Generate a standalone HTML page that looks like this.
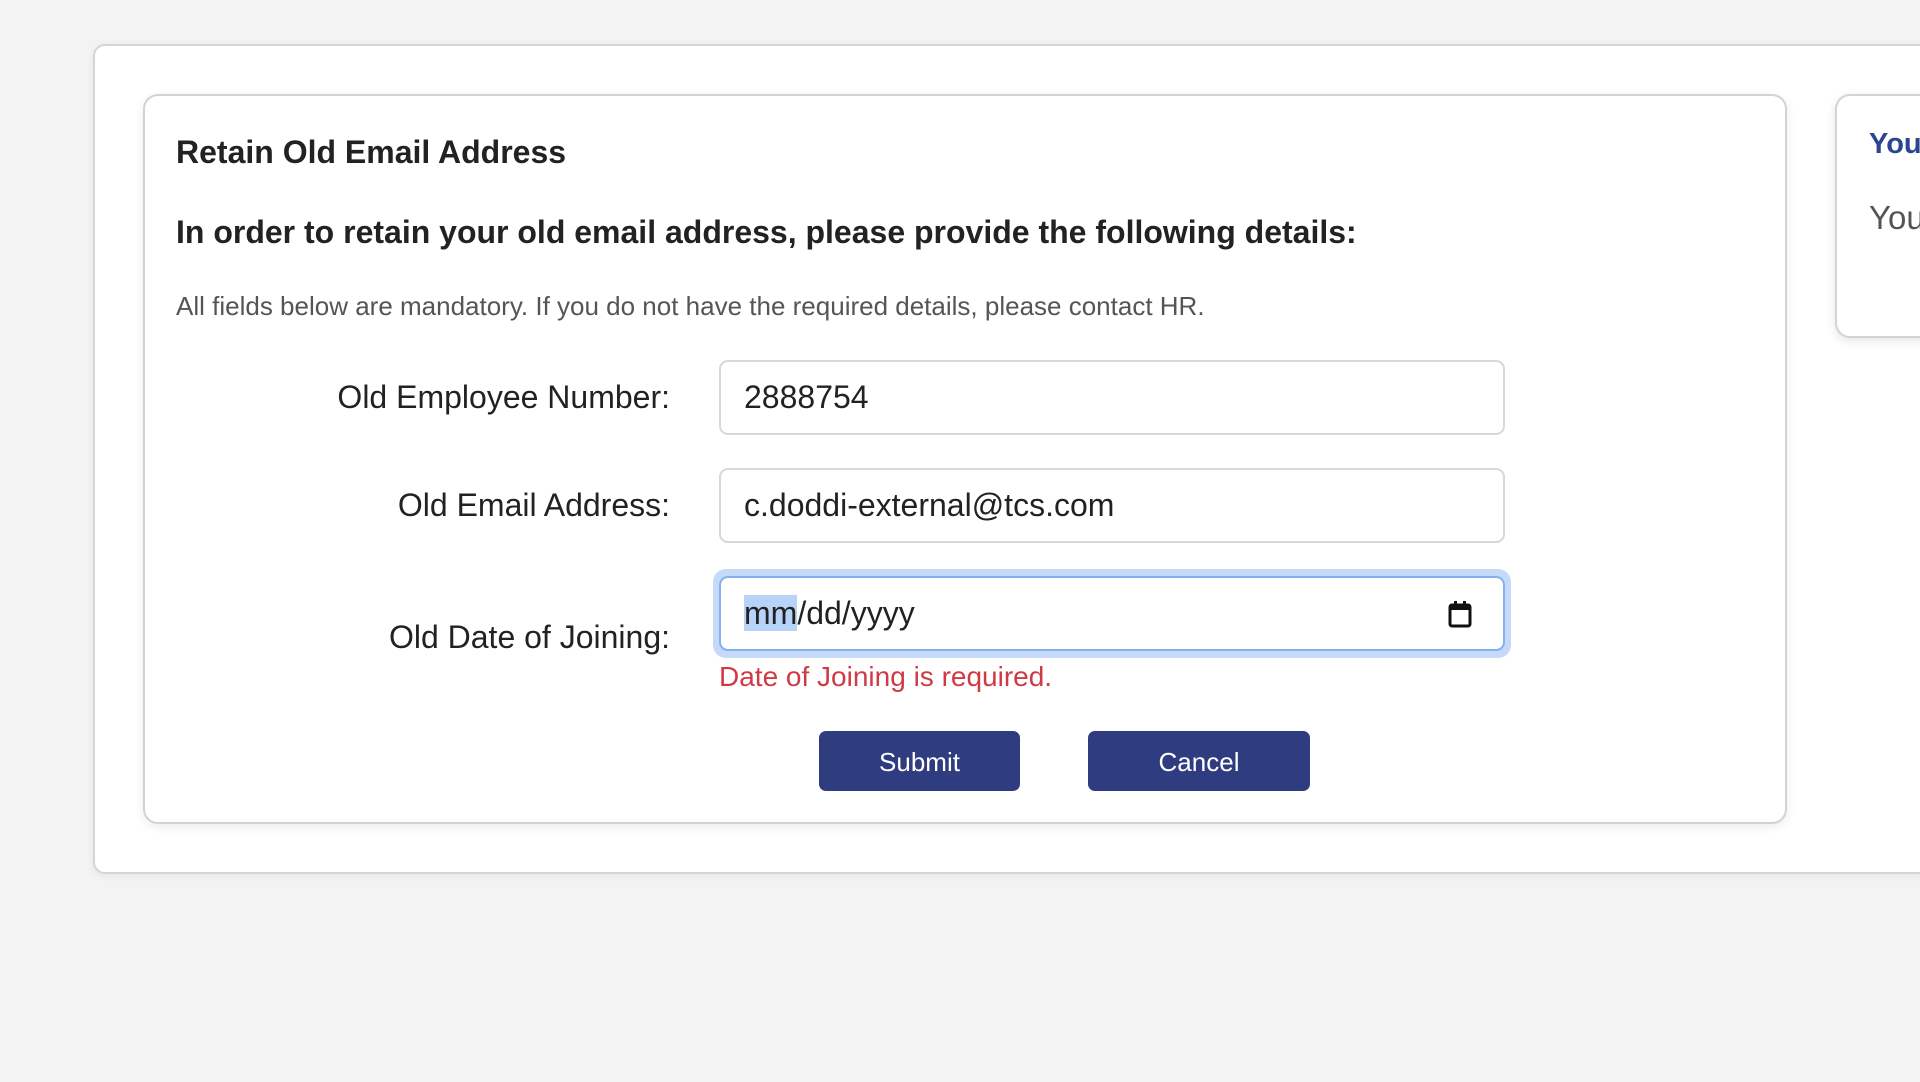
<!DOCTYPE html>
<html><head><style>
*{box-sizing:border-box;margin:0;padding:0}
body{width:1920px;height:1082px;background:#f3f3f3;font-family:"Liberation Sans",Arial,sans-serif;position:relative;overflow:hidden;color:#222}
.outer{position:absolute;left:93px;top:44px;width:1900px;height:830px;background:#fff;border:2px solid #d5d5d5;border-radius:12px;box-shadow:0 2px 8px rgba(0,0,0,.06)}
.inner{position:absolute;left:143px;top:94px;width:1644px;height:730px;background:#fff;border:2px solid #d3d3d3;border-radius:15px;box-shadow:0 3px 10px rgba(0,0,0,.08)}
.side{position:absolute;left:1835px;top:94px;width:200px;height:244px;background:#fff;border:2px solid #d3d3d3;border-radius:15px;box-shadow:0 3px 10px rgba(0,0,0,.1)}
.t{position:absolute;white-space:nowrap}
.inp{position:absolute;left:719px;width:786px;height:75px;border:2px solid #d8d8d8;border-radius:9px;font-size:32px;padding-left:23px;line-height:71px;color:#222}
.btn{position:absolute;top:731px;height:60px;background:#2f3c7f;color:#fff;border-radius:7px;font-size:26px;text-align:center;line-height:62px}
</style></head><body>
<div class="outer"></div>
<div class="inner"></div>
<div class="side"></div>
<div class="t" style="left:1869px;top:128px;font-size:29px;font-weight:bold;color:#2c4591">Your</div>
<div class="t" style="left:1869px;top:199px;font-size:33px;color:#555">Your</div>
<div class="t" style="left:176px;top:134px;font-size:32px;font-weight:bold">Retain Old Email Address</div>
<div class="t" style="left:176px;top:214px;font-size:32px;font-weight:bold">In order to retain your old email address, please provide the following details:</div>
<div class="t" style="left:176px;top:291px;font-size:26px;color:#555">All fields below are mandatory. If you do not have the required details, please contact HR.</div>
<div class="t" style="right:1250px;top:379px;font-size:32px">Old Employee Number:</div>
<div class="t" style="right:1250px;top:487px;font-size:32px">Old Email Address:</div>
<div class="t" style="right:1250px;top:619px;font-size:32px">Old Date of Joining:</div>
<div class="inp" style="top:360px">2888754</div>
<div class="inp" style="top:468px">c.doddi-external@tcs.com</div>
<div style="position:absolute;left:713px;top:569px;width:798px;height:89px;border-radius:13px;background:#c5d9f8"></div>
<div class="inp" style="top:576px;border-color:#86aef0;background:#fff"><span style="background:#b8d3f8">mm</span>/dd/yyyy
<svg style="position:absolute;right:30px;top:22px" width="26" height="28" viewBox="0 0 26 28"><rect x="3" y="5" width="20" height="21" rx="2" fill="none" stroke="#111" stroke-width="3"/><rect x="3" y="5" width="20" height="5" fill="#111"/><rect x="7" y="1" width="3" height="6" fill="#111"/><rect x="16" y="1" width="3" height="6" fill="#111"/></svg></div>
<div class="t" style="left:719px;top:661px;font-size:28px;color:#d03a44">Date of Joining is required.</div>
<div class="btn" style="left:819px;width:201px">Submit</div>
<div class="btn" style="left:1088px;width:222px">Cancel</div>
</body></html>
